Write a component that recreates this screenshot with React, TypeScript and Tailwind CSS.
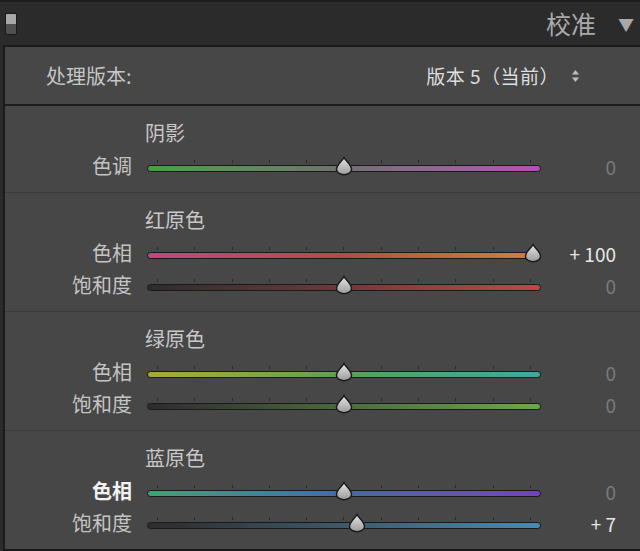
import React from 'react';

type Slider = { label: string; value: number; track: string; active?: boolean };
type Section = { title: string; sliders: Slider[] };

const sections: Section[] = [
  {
    title: '阴影',
    sliders: [
      { label: '色调', value: 0, track: 'bg-linear-to-r from-[#3da43d] via-[#707070] to-[#b84cba]' },
    ],
  },
  {
    title: '红原色',
    sliders: [
      { label: '色相', value: 100, track: 'bg-linear-to-r from-[#c2467e] via-[#b94848] to-[#c4853e]' },
      { label: '饱和度', value: 0, track: 'bg-linear-to-r from-[#2c2c2c] via-[#6e3a3a] to-[#c44646]' },
    ],
  },
  {
    title: '绿原色',
    sliders: [
      { label: '色相', value: 0, track: 'bg-linear-to-r from-[#aaaa36] via-[#58a250] to-[#3ea8a2]' },
      { label: '饱和度', value: 0, track: 'bg-linear-to-r from-[#2c2c2c] via-[#4c6a3c] to-[#6aaa48]' },
    ],
  },
  {
    title: '蓝原色',
    sliders: [
      { label: '色相', value: 0, track: 'bg-linear-to-r from-[#3ca472] via-[#4668aa] to-[#7242ba]', active: true },
      { label: '饱和度', value: 7, track: 'bg-linear-to-r from-[#2c2c2c] via-[#3c5a6c] to-[#4a8ab2]' },
    ],
  },
];

const Thumb = () => (
  <svg width="19" height="20" viewBox="0 0 19 20">
    <defs>
      <linearGradient id="thumbFill" x1="0" y1="0" x2="0" y2="1">
        <stop offset="0" stopColor="#e6e6e6" />
        <stop offset="1" stopColor="#9a9a9a" />
      </linearGradient>
    </defs>
    <path
      d="M9.5 1.5 C11 5 17 8.5 17 13.5 A7.5 5.2 0 0 1 2 13.5 C2 8.5 8 5 9.5 1.5 Z"
      fill="url(#thumbFill)"
      stroke="#1c1c1c"
      strokeWidth="1.5"
    />
  </svg>
);

const SliderRow = ({ s }: { s: Slider }) => {
  const pct = ((s.value + 100) / 200) * 100;
  const text = s.value === 0 ? '0' : `+ ${s.value}`;
  return (
    <div className="flex h-[32px] items-center">
      <div
        className={`w-[127px] text-right text-[20px] leading-none ${
          s.active ? 'text-[#f2f2f2] font-bold' : 'text-[#c4c4c4]'
        }`}
      >
        {s.label}
      </div>
      <div className="relative ml-[15px] h-[20px] w-[394px]">
        {/* ticks */}
        <div className="absolute left-[10px] right-[10px] top-[4px] flex justify-between">
          {Array.from({ length: 11 }).map((_, i) => (
            <div key={i} className="h-[3px] w-px bg-[#2a2a2a]" />
          ))}
        </div>
        <div
          className={`absolute left-0 right-0 top-[9px] h-[7px] rounded-full border border-[#1a1a1a] ${s.track}`}
        />
        <div
          className="absolute top-0 -translate-x-1/2"
          style={{ left: `calc(${pct}% * 0.96 + 2%)` }}
        >
          <Thumb />
        </div>
      </div>
      <div
        className={`flex-1 pr-[24px] text-right text-[19px] leading-none ${
          s.value === 0 ? 'text-[#7a7a7a]' : 'text-[#e6e6e6]'
        }`}
      >
        {text}
      </div>
    </div>
  );
};

export default function App() {
  return (
    <div
      className="flex h-[551px] w-[640px] flex-col overflow-hidden bg-[#2b2b2b]"
      style={{ fontFamily: '"Noto Sans CJK SC", "Noto Sans", sans-serif' }}
    >
      {/* header */}
      <div className="flex h-[45px] shrink-0 items-center border-t-2 border-[#1e1e1e] pl-[5px] pr-[5px]">
        <div className="flex h-[22px] w-[12px] flex-col overflow-hidden rounded-[2px] border border-[#1a1a1a]">
          <div className="h-1/2 bg-[#a8a8a8]" />
          <div className="h-1/2 bg-[#505050]" />
        </div>
        <div className="flex-1" />
        <div className="text-[25px] leading-none text-[#a9a9a9]">校准</div>
        <div className="ml-[22px] mr-[1px] text-[16px] leading-none text-[#a8a8a8]">▼</div>
      </div>

      {/* panel */}
      <div className="ml-[3px] flex flex-1 flex-col border-b-[3px] border-l-2 border-t-2 border-[#1b1b1b] bg-[#474747]">
        <div className="flex h-[59px] shrink-0 items-center border-b-2 border-[#1e1e1e] pl-[41px] pr-[60px]">
          <div className="text-[20px] leading-none text-[#c6c6c6]">处理版本:</div>
          <div className="flex-1" />
          <div className="text-[19px] leading-none tracking-[0.5px] text-[#dedede]">版本 5（当前）</div>
          <svg className="ml-[12px]" width="9" height="14" viewBox="0 0 9 14">
            <path d="M4.5 1 L8 5.5 H1 Z" fill="#bdbdbd" />
            <path d="M4.5 13 L8 8.5 H1 Z" fill="#bdbdbd" />
          </svg>
        </div>

        {sections.map((sec, i) => (
          <div
            key={sec.title}
            className={`flex flex-col pb-[10px] pt-[15px] ${
              i < sections.length - 1 ? 'border-b border-[#3b3b3b]' : ''
            }`}
          >
            <div className="mb-[5px] flex h-[24px] items-center pl-[140px] text-[20px] leading-none text-[#c8c8c8]">
              {sec.title}
            </div>
            {sec.sliders.map((s) => (
              <SliderRow key={s.label} s={s} />
            ))}
          </div>
        ))}
        <div className="flex-1" />
      </div>
    </div>
  );
}
